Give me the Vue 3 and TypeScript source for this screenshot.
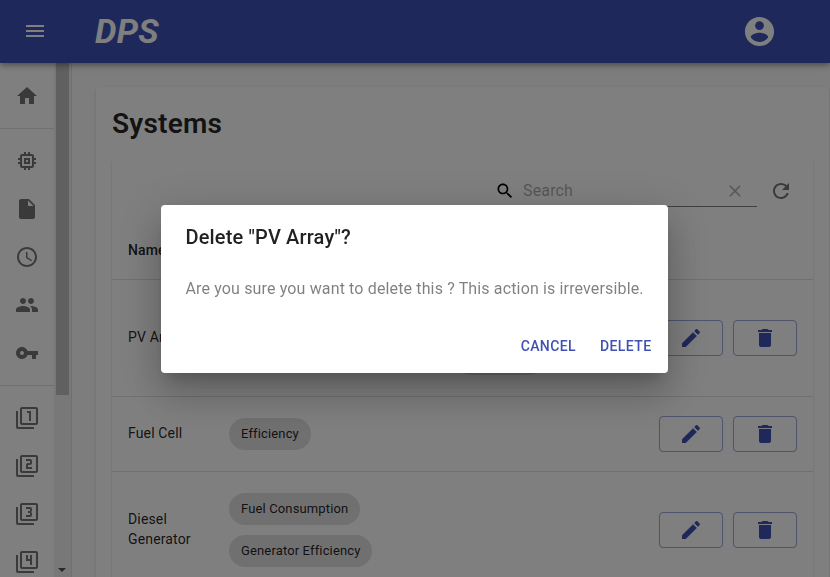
<script setup lang="ts">
interface SystemRow {
  name: string
  chips: string[]
  size: 'tall' | 'auto'
}

const navGroups: string[][] = [
  ['M10 20v-6h4v6h5v-8h3L12 3 2 12h3v8z'],
  [
    'M15 9H9v6h6V9zm-2 4h-2v-2h2v2zm8-2V9h-2V7c0-1.1-.9-2-2-2h-2V3h-2v2h-2V3H9v2H7c-1.1 0-2 .9-2 2v2H3v2h2v2H3v2h2v2c0 1.1.9 2 2 2h2v2h2v-2h2v2h2v-2h2c1.1 0 2-.9 2-2v-2h2v-2h-2v-2h2zm-4 6H7V7h10v10z',
    'M6 2c-1.1 0-1.99.9-1.99 2L4 20c0 1.1.89 2 1.99 2H18c1.1 0 2-.9 2-2V8l-6-6H6zm7 7V3.5L18.5 9H13z',
    'M11.99 2C6.47 2 2 6.48 2 12s4.47 10 9.99 10C17.52 22 22 17.52 22 12S17.52 2 11.99 2zM12 20c-4.42 0-8-3.58-8-8s3.58-8 8-8 8 3.58 8 8-3.58 8-8 8zM12.5 7H11v6l5.25 3.15.75-1.23-4.5-2.67z',
    'M16 11c1.66 0 2.99-1.34 2.99-3S17.66 5 16 5c-1.66 0-3 1.34-3 3s1.34 3 3 3zm-8 0c1.66 0 2.99-1.34 2.99-3S9.66 5 8 5C6.34 5 5 6.34 5 8s1.34 3 3 3zm0 2c-2.33 0-7 1.17-7 3.5V19h14v-2.5c0-2.33-4.67-3.5-7-3.5zm8 0c-.29 0-.62.02-.97.05 1.16.84 1.97 1.97 1.97 3.45V19h6v-2.5c0-2.33-4.67-3.5-7-3.5z',
    'M12.65 10C11.83 7.67 9.61 6 7 6c-3.31 0-6 2.69-6 6s2.69 6 6 6c2.61 0 4.83-1.67 5.65-4H17v4h4v-4h2v-4H12.65zM7 14c-1.1 0-2-.9-2-2s.9-2 2-2 2 .9 2 2-.9 2-2 2z',
  ],
  [
    'M3 5H1v16c0 1.1.9 2 2 2h16v-2H3V5zm11 10h2V5h-4v2h2v8zm7-14H7c-1.1 0-2 .9-2 2v14c0 1.1.9 2 2 2h14c1.1 0 2-.9 2-2V3c0-1.1-.9-2-2-2zm0 16H7V3h14v14z',
    'M3 5H1v16c0 1.1.9 2 2 2h16v-2H3V5zm18-4H7c-1.1 0-2 .9-2 2v14c0 1.1.9 2 2 2h14c1.1 0 2-.9 2-2V3c0-1.1-.9-2-2-2zm0 16H7V3h14v14zm-4-4h-4v-2h2c1.1 0 2-.89 2-2V7c0-1.11-.9-2-2-2h-4v2h4v2h-2c-1.1 0-2 .89-2 2v4h6v-2z',
    'M21 1H7c-1.1 0-2 .9-2 2v14c0 1.1.9 2 2 2h14c1.1 0 2-.9 2-2V3c0-1.1-.9-2-2-2zm0 16H7V3h14v14zM3 5H1v16c0 1.1.9 2 2 2h16v-2H3V5zm14 8v-1.5c0-.83-.67-1.5-1.5-1.5.83 0 1.5-.67 1.5-1.5V7c0-1.11-.9-2-2-2h-4v2h4v2h-2v2h2v2h-4v2h4c1.1 0 2-.89 2-2z',
    'M3 5H1v16c0 1.1.9 2 2 2h16v-2H3V5zm12 10h2V5h-2v4h-2V5h-2v6h4v4zm6-14H7c-1.1 0-2 .9-2 2v14c0 1.1.9 2 2 2h14c1.1 0 2-.9 2-2V3c0-1.1-.9-2-2-2zm0 16H7V3h14v14z',
  ],
]

const rows: SystemRow[] = [
  { name: 'PV Array', chips: [], size: 'tall' },
  { name: 'Fuel Cell', chips: ['Efficiency'], size: 'auto' },
  { name: 'Diesel Generator', chips: ['Fuel Consumption', 'Generator Efficiency'], size: 'auto' },
]
</script>

<template>
  <div class="app">
    <header class="topbar">
      <svg class="icon" viewBox="0 0 24 24"><path d="M3 18h18v-2H3v2zm0-5h18v-2H3v2zm0-7v2h18V6H3z" /></svg>
      <span class="brand">DPS</span>
      <svg class="account" viewBox="0 0 24 24"><path d="M12 2C6.48 2 2 6.48 2 12s4.48 10 10 10 10-4.48 10-10S17.52 2 12 2zm0 3c1.66 0 3 1.34 3 3s-1.34 3-3 3-3-1.34-3-3 1.34-3 3-3zm0 14.2c-2.5 0-4.71-1.28-6-3.22.03-1.99 4-3.08 6-3.08 1.99 0 5.97 1.09 6 3.08-1.29 1.94-3.5 3.22-6 3.22z" /></svg>
    </header>

    <div class="body">
      <aside class="sidebar">
        <nav class="nav">
          <ul v-for="(group, g) in navGroups" :key="g" class="group">
            <li v-for="(path, i) in group" :key="i" class="nav-item">
              <svg class="icon" viewBox="0 0 24 24"><path :d="path" /></svg>
            </li>
          </ul>
        </nav>
        <div class="scrollbar">
          <div class="thumb"></div>
          <svg class="arrow" viewBox="0 0 8 4"><path d="M0 0h8L4 4z" /></svg>
        </div>
      </aside>

      <main class="main">
        <section class="card page">
          <h1 class="heading">Systems</h1>
          <div class="card table">
            <div class="toolbar">
              <div class="search">
                <svg class="small" viewBox="0 0 24 24"><path d="M15.5 14h-.79l-.28-.27C15.41 12.59 16 11.11 16 9.5 16 5.91 13.09 3 9.5 3S3 5.91 3 9.5 5.91 16 9.5 16c1.61 0 3.09-.59 4.23-1.57l.27.28v.79l5 4.99L20.49 19l-4.99-5zm-6 0C7.01 14 5 11.99 5 9.5S7.01 5 9.5 5 14 7.01 14 9.5 11.99 14 9.5 14z" /></svg>
                <span class="placeholder">Search</span>
                <svg class="small clear" viewBox="0 0 24 24"><path d="M19 6.41L17.59 5 12 10.59 6.41 5 5 6.41 10.59 12 5 17.59 6.41 19 12 13.41 17.59 19 19 17.59 13.41 12z" /></svg>
              </div>
              <svg class="icon refresh" viewBox="0 0 24 24"><path d="M17.65 6.35C16.2 4.9 14.21 4 12 4c-4.42 0-7.99 3.58-7.99 8s3.57 8 7.99 8c3.73 0 6.84-2.55 7.73-6h-2.08c-.82 2.33-3.04 4-5.65 4-3.31 0-6-2.69-6-6s2.69-6 6-6c1.66 0 3.14.69 4.22 1.78L13 11h7V4l-2.35 2.35z" /></svg>
            </div>
            <div class="row head"><span>Name</span></div>
            <div v-for="row in rows" :key="row.name" class="row" :class="row.size">
              <span class="name">{{ row.name }}</span>
              <div class="chips">
                <span v-for="chip in row.chips" :key="chip" class="chip">{{ chip }}</span>
                <span v-if="row.size === 'tall'" class="chip blank"></span>
              </div>
              <div class="actions">
                <button class="outlined">
                  <svg class="icon" viewBox="0 0 24 24"><path d="M3 17.25V21h3.75L17.81 9.94l-3.75-3.75L3 17.25zM20.71 7.04c.39-.39.39-1.02 0-1.41l-2.34-2.34c-.39-.39-1.02-.39-1.41 0l-1.83 1.83 3.75 3.75 1.83-1.83z" /></svg>
                </button>
                <button class="outlined">
                  <svg class="icon" viewBox="0 0 24 24"><path d="M6 19c0 1.1.9 2 2 2h8c1.1 0 2-.9 2-2V7H6v12zM19 4h-3.5l-1-1h-5l-1 1H5v2h14V4z" /></svg>
                </button>
              </div>
            </div>
          </div>
        </section>
      </main>
    </div>

    <div class="backdrop">
      <div class="dialog" role="dialog">
        <h2 class="dialog-title">Delete "PV Array"?</h2>
        <p class="dialog-text">Are you sure you want to delete this ? This action is irreversible.</p>
        <div class="dialog-actions">
          <button class="text-button">Cancel</button>
          <button class="text-button">Delete</button>
        </div>
      </div>
    </div>
  </div>
</template>

<style>
html,
body {
  overflow: hidden;
}
</style>

<style scoped>
* {
  box-sizing: border-box;
}

.app {
  display: flex;
  flex-direction: column;
  height: 577px;
  overflow: hidden;
  background: #fafafa;
  color: rgba(0, 0, 0, 0.87);
  font-family: Roboto, "Liberation Sans", sans-serif;
}

svg {
  display: block;
  flex: none;
  fill: currentColor;
}

.icon {
  width: 24px;
  height: 24px;
}

.small {
  width: 20px;
  height: 20px;
}

.topbar {
  display: flex;
  align-items: center;
  flex: none;
  height: 63px;
  padding: 0 52px 1px 23px;
  background: #3f51b5;
  color: #fff;
  z-index: 1;
  box-shadow: 0 2px 4px -1px rgba(0, 0, 0, 0.2), 0 4px 5px 0 rgba(0, 0, 0, 0.14), 0 1px 10px 0 rgba(0, 0, 0, 0.12);
}

.brand {
  flex: 1;
  margin-left: 48px;
  font-size: 34px;
  font-style: italic;
  font-weight: 700;
  line-height: 42px;
  letter-spacing: 0.00735em;
}

.account {
  width: 35px;
  height: 35px;
  margin-right: 1px;
  margin-top: 1px;
}

.body {
  display: flex;
  flex: 1;
  min-height: 0;
}

.sidebar {
  display: flex;
  flex: none;
  width: 72px;
  overflow: hidden;
  border-right: 1px solid rgba(0, 0, 0, 0.12);
  background: #fff;
}

.nav {
  width: 54px;
  padding-top: 1px;
  color: rgba(0, 0, 0, 0.54);
}

.group {
  margin: 0;
  padding: 8px 0;
  list-style: none;
}

.group + .group {
  border-top: 1px solid rgba(0, 0, 0, 0.12);
}

.nav-item {
  display: flex;
  align-items: center;
  height: 48px;
  padding-left: 15px;
}

.scrollbar {
  display: flex;
  flex-direction: column;
  justify-content: space-between;
  width: 17px;
  padding: 0 2px 5px;
  background: #f1f1f1;
}

.thumb {
  height: 332px;
  background: #c1c1c1;
}

.arrow {
  width: 8px;
  height: 4px;
  margin-left: 2px;
  fill: #505050;
}

.main {
  flex: 1;
  min-width: 0;
  padding: 24px 1px 0 24px;
}

.card {
  border-radius: 4px;
  background: #fff;
  box-shadow: 0 2px 1px -1px rgba(0, 0, 0, 0.2), 0 1px 1px 0 rgba(0, 0, 0, 0.14), 0 1px 3px 0 rgba(0, 0, 0, 0.12);
}

.page {
  height: 560px;
  padding: 16px;
}

.table {
  height: 480px;
}

.heading {
  margin: 0 0 16px;
  padding-top: 1px;
  font-size: 28px;
  font-weight: 600;
  line-height: 39px;
  letter-spacing: 0.0075em;
}

.toolbar {
  display: flex;
  align-items: center;
  justify-content: flex-end;
  height: 64px;
  padding-right: 20px;
}

.search {
  display: flex;
  align-items: center;
  width: 262px;
  height: 32px;
  margin-right: 12px;
  border-bottom: 1px solid rgba(0, 0, 0, 0.5);
  color: #000;
}

.placeholder {
  flex: 1;
  margin-left: 8px;
  color: rgba(0, 0, 0, 0.35);
  font-size: 16px;
  line-height: 19px;
  letter-spacing: 0.00938em;
}

.clear {
  margin-right: 12px;
  color: rgba(0, 0, 0, 0.3);
}

.refresh {
  color: rgba(0, 0, 0, 0.54);
}

.row {
  display: grid;
  grid-template-columns: 85px 1fr 138px;
  column-gap: 16px;
  align-items: center;
  padding: 16px;
  border-bottom: 1px solid #e0e0e0;
  font-size: 14px;
  line-height: 20px;
  letter-spacing: 0.01071em;
}

.head {
  height: 57px;
  padding-top: 14px;
  font-weight: 500;
}

.tall {
  height: 117px;
}

.name {
  padding-bottom: 2px;
}

.chips {
  display: flex;
  flex-direction: column;
  align-items: flex-start;
}

.chip {
  height: 32px;
  margin: 5px 0;
  padding: 0 12px;
  border-radius: 16px;
  background: #e0e0e0;
  font-size: 13px;
  line-height: 32px;
  letter-spacing: 0.14px;
}

.blank {
  width: 90px;
  margin: 47px 0 5px 226px;
}

.actions {
  display: flex;
  gap: 10px;
}

button {
  margin: 0;
  border: 0;
  background: none;
  color: #3f51b5;
  font-family: inherit;
}

.outlined {
  display: flex;
  align-items: center;
  justify-content: center;
  width: 64px;
  height: 36px;
  padding: 0;
  border: 1px solid rgba(63, 81, 181, 0.5);
  border-radius: 4px;
}

.backdrop {
  position: fixed;
  inset: 0;
  z-index: 2;
  display: flex;
  align-items: center;
  justify-content: center;
  padding: 1px 1px 0 0;
  background: rgba(0, 0, 0, 0.5);
}

.dialog {
  width: 507px;
  height: 168px;
  border-radius: 4px;
  background: #fff;
  box-shadow: 0 11px 15px -7px rgba(0, 0, 0, 0.2), 0 24px 38px 3px rgba(0, 0, 0, 0.14), 0 9px 46px 8px rgba(0, 0, 0, 0.12);
}

.dialog-title {
  margin: 0;
  padding: 16px 24.5px;
  font-size: 20px;
  font-weight: 500;
  line-height: 32px;
  letter-spacing: 0.0075em;
}

.dialog-text {
  margin: 0;
  padding: 8px 24.5px 20px;
  color: rgba(0, 0, 0, 0.5);
  font-size: 16px;
  line-height: 24px;
  letter-spacing: 0.143px;
  white-space: nowrap;
}

.dialog-actions {
  display: flex;
  justify-content: flex-end;
  gap: 8px;
  padding: 7px 8.5px;
}

.text-button {
  height: 36px;
  padding: 0 8px;
  font-size: 14px;
  font-weight: 500;
  letter-spacing: 0.02857em;
  text-transform: uppercase;
}
</style>
